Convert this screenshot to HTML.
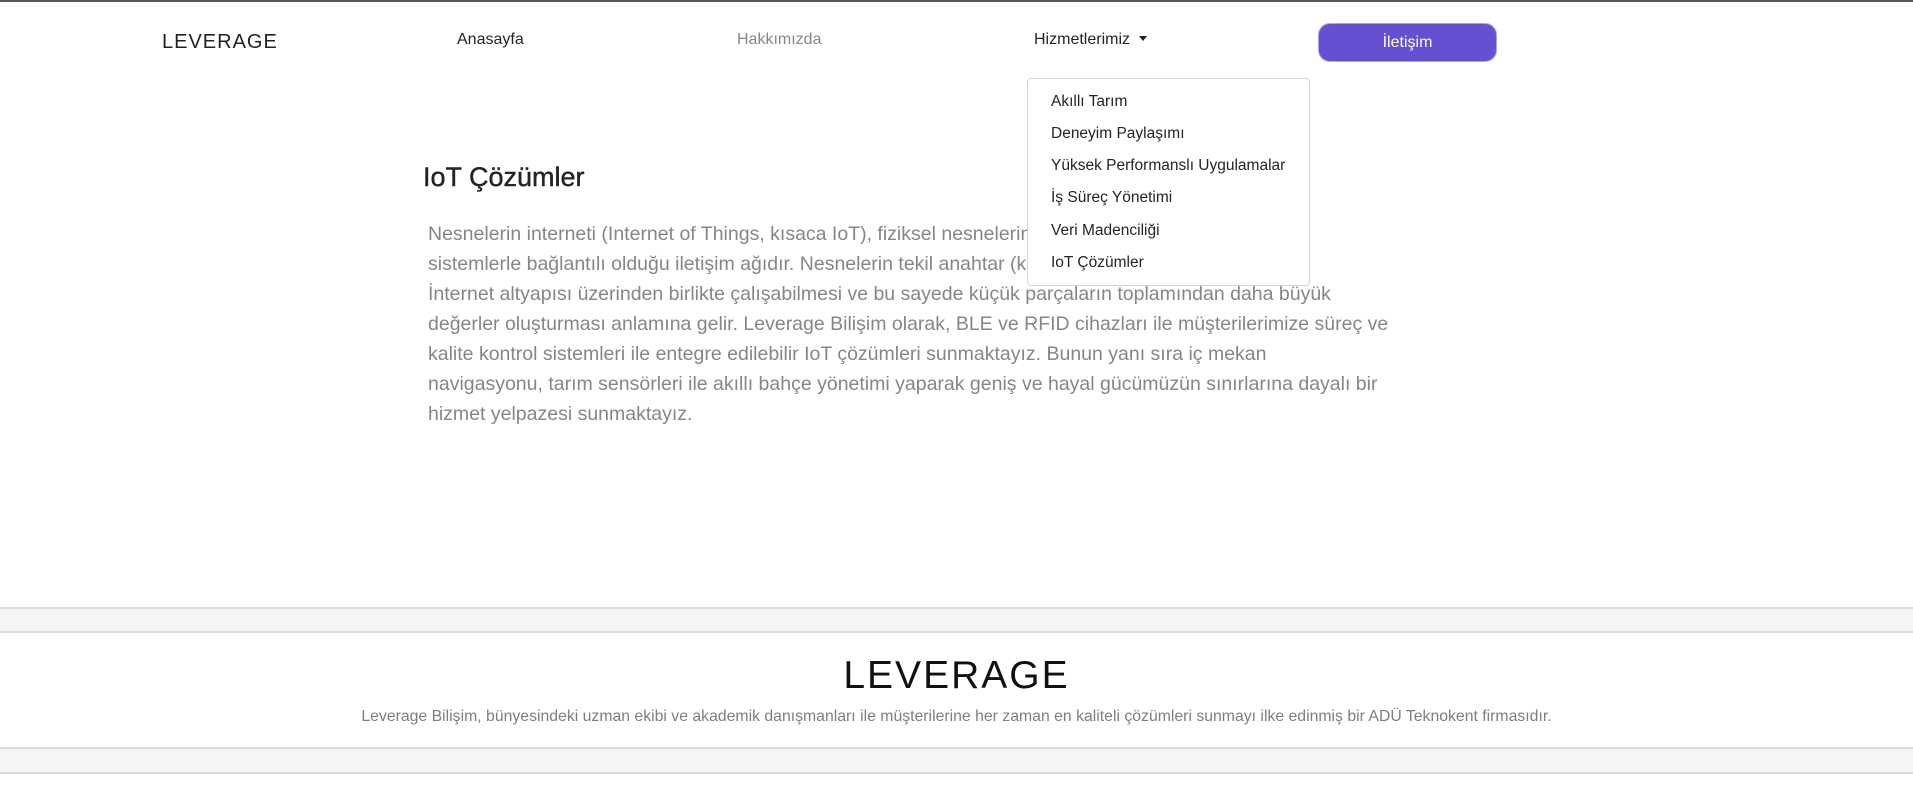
<!DOCTYPE html>
<html><head><meta charset="utf-8"><style>
*{margin:0;padding:0;box-sizing:border-box}
body{width:1913px;height:793px;background:#fff;font-family:"Liberation Sans","DejaVu Sans",sans-serif;position:relative;overflow:hidden;border-top:2px solid #555}
.a{position:absolute;white-space:nowrap}
.nav{font-size:16px;color:#212529;top:29px}
.dd{position:absolute;left:1027px;top:76px;width:283px;height:208px;border:1px solid #d5d5d5;border-radius:4px;background:#fff}
.dd div{position:absolute;left:23px;font-size:15.5px;color:#212529;line-height:20px}
.t{position:absolute;left:428px;top:217px;font-size:19.5px;line-height:30px;color:#868686;white-space:nowrap}
</style></head><body>
<div class="a" style="left:162px;top:29px;font-size:20px;letter-spacing:1px;color:#222">LEVERAGE</div>
<div class="a nav" style="left:457px">Anasayfa</div>
<div class="a nav" style="left:737px;color:#888">Hakkımızda</div>
<div class="a nav" style="left:1034px">Hizmetlerimiz <span style="display:inline-block;width:0;height:0;border-left:4.5px solid transparent;border-right:4.5px solid transparent;border-top:5px solid #222;vertical-align:3px;margin-left:5px"></span></div>
<div class="a" style="left:1318px;top:21px;width:179px;height:39px;border-radius:12px;background:#6351d1;border:1px solid #a9a4e6;color:#fff;font-size:16px;text-align:center;line-height:37px">İletişim</div>
<div class="a" style="left:423px;top:160px;font-size:27px;color:#212529;-webkit-text-stroke:0.4px #212529">IoT Çözümler</div>
<div class="t">Nesnelerin interneti (Internet of Things, kısaca IoT), fiziksel nesnelerin birbirleriyle ya da daha büyük<br>sistemlerle bağlantılı olduğu iletişim ağıdır. Nesnelerin tekil anahtar (kendine özgü) teknolojisiyle tek<br>İnternet altyapısı üzerinden birlikte çalışabilmesi ve bu sayede küçük parçaların toplamından daha büyük<br>değerler oluşturması anlamına gelir. Leverage Bilişim olarak, BLE ve RFID cihazları ile müşterilerimize süreç ve<br>kalite kontrol sistemleri ile entegre edilebilir IoT çözümleri sunmaktayız. Bunun yanı sıra iç mekan<br>navigasyonu, tarım sensörleri ile akıllı bahçe yönetimi yaparak geniş ve hayal gücümüzün sınırlarına dayalı bir<br>hizmet yelpazesi sunmaktayız.</div>
<div class="dd" style="z-index:2">
<div style="top:13px">Akıllı Tarım</div>
<div style="top:45px">Deneyim Paylaşımı</div>
<div style="top:77px">Yüksek Performanslı Uygulamalar</div>
<div style="top:109px">İş Süreç Yönetimi</div>
<div style="top:142px">Veri Madenciliği</div>
<div style="top:174px">IoT Çözümler</div>
</div>
<div class="a" style="left:0;top:605px;width:1913px;height:26px;background:#f5f5f5;border-top:2px solid #dcdcdc;border-bottom:2px solid #dcdcdc"></div>
<div class="a" style="left:0;top:745px;width:1913px;height:27px;background:#f5f5f5;border-top:2px solid #dcdcdc;border-bottom:2px solid #dcdcdc"></div>
<div class="a" style="left:0;top:652px;width:1913px;text-align:center;font-size:39px;letter-spacing:2px;color:#111">LEVERAGE</div>
<div class="a" style="left:0;top:706px;width:1913px;text-align:center;font-size:15.8px;color:#7a7f85">Leverage Bilişim, bünyesindeki uzman ekibi ve akademik danışmanları ile müşterilerine her zaman en kaliteli çözümleri sunmayı ilke edinmiş bir ADÜ Teknokent firmasıdır.</div>
</body></html>
